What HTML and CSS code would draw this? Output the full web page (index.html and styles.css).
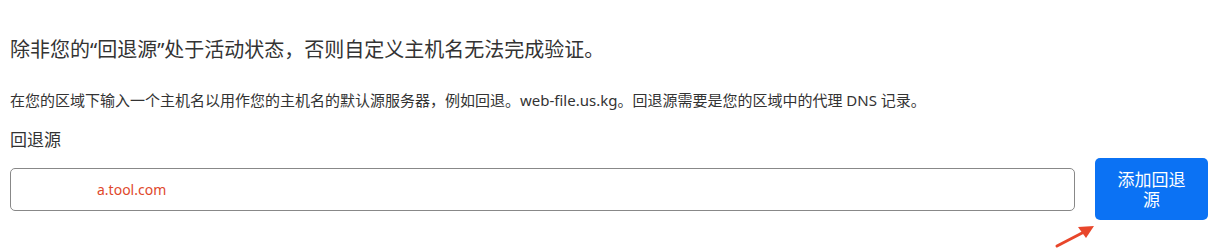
FILE: index.html
```html
<!doctype html>
<html>
    <head>
        <title>回退源</title>
        <link rel="stylesheet" href="styles.css">
    </head>
    <body>
        <main class="fallback">
            <h2 class="title">除非您的“回退源”处于活动状态，否则自定义主机名无法完成验证。</h2>
            <p class="desc">在您的区域下输入一个主机名以用作您的主机名的默认源服务器，例如回退。web-file.us.kg。回退源需要是您的区域中的代理 DNS 记录。</p>
            <label class="label" for="origin">回退源</label>
            <div class="row">
                <input id="origin" class="field" type="text" value="a.tool.com">
                <div class="btn-wrap">
                    <button class="btn">添加回退源</button>
                    <svg class="arrow" width="50" height="30" viewBox="0 0 50 30">
                        <path d="M3 26 L30 12" stroke="#e8462b" stroke-width="3" stroke-linecap="round" fill="none"/>
                        <polygon points="40,6 24,7 32,18" fill="#e8462b"/>
                    </svg>
                </div>
            </div>
        </main>
    </body>
</html>
```

FILE: styles.css
```css
html {
    background: white;
    font-family: "Noto Sans", "Noto Sans CJK SC", sans-serif;
    color: #333;
}
body {
    margin: 0;
    min-height: 252px;
}
.fallback {
    padding: 35px 10px 32px 10px;
}
.title {
    font-size: 20px;
    font-weight: normal;
    line-height: 30px;
    margin: 0 0 25px 0;
}
.desc {
    font-size: 15px;
    line-height: 20px;
    margin: 0 0 18px 0;
}
.label {
    display: block;
    font-size: 17px;
    line-height: 24px;
    margin-bottom: 6px;
}
.row {
    display: flex;
    align-items: center;
    gap: 20px;
}
.field {
    flex: 1;
    height: 43px;
    box-sizing: border-box;
    border: 1px solid #888;
    border-radius: 5px;
    padding: 0 0 0 86px;
    font-family: "Noto Sans", sans-serif;
    font-size: 14px;
    color: #e0482b;
    outline: none;
}
.btn-wrap {
    position: relative;
}
.btn {
    display: block;
    width: 113px;
    height: 62px;
    padding: 0 16px;
    border: none;
    border-radius: 5px;
    background: #0b72f4;
    color: white;
    font-family: "Noto Sans CJK SC", sans-serif;
    font-size: 17px;
    line-height: 20px;
}
.arrow {
    position: absolute;
    left: -41px;
    top: 62px;
    display: block;
}
```
